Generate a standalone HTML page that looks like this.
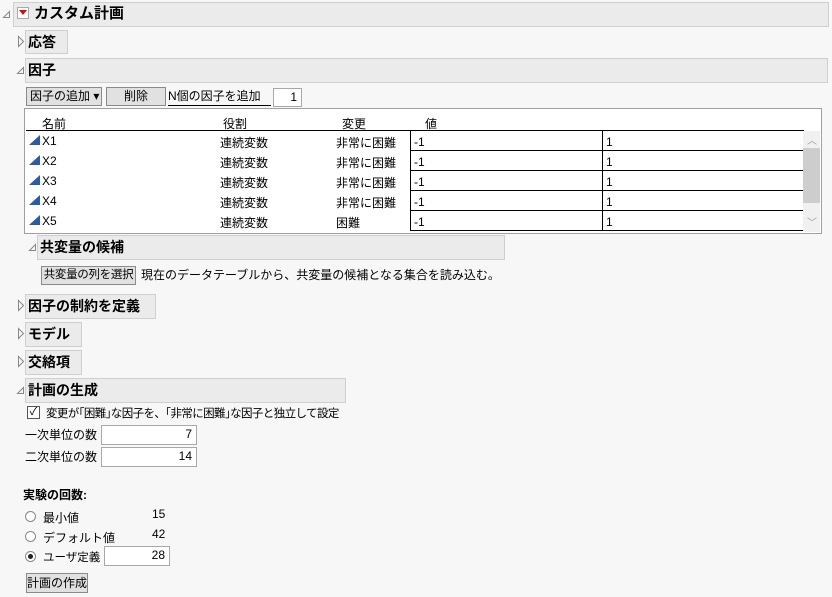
<!DOCTYPE html>
<html><head><meta charset="utf-8"><style>
body{margin:0;width:832px;height:597px;background:#f7f7f7;font-family:"Liberation Sans","Noto Sans CJK JP",sans-serif;font-size:12px;color:#000;position:relative;overflow:hidden}
.a{position:absolute;white-space:nowrap}
.hd{position:absolute;background:#ebebeb;border:1px solid #cfcfcf;box-sizing:border-box;font-weight:bold;font-size:14px;line-height:22px;padding-left:2px;white-space:nowrap}
.tri{position:absolute;width:0;height:0}
.btn{position:absolute;background:#e1e1e1;border:1px solid #8a8a8a;box-sizing:border-box;text-align:center;line-height:17px;font-size:12px;white-space:nowrap;overflow:hidden}
.inp{position:absolute;background:#fff;border:1px solid #a8a8a8;box-sizing:border-box;text-align:right;padding-right:4px;line-height:17px}
.rad{position:absolute;width:11px;height:11px;border:1px solid #888;border-radius:50%;background:#fff;box-sizing:border-box}
.row{position:absolute;left:26px;height:20px;width:777px}
.row span{position:absolute;top:4px}
.cell{position:absolute;top:0;height:21px;border:1px solid #000;box-sizing:border-box;background:#fff;padding-left:3px;line-height:22px}
.ic{position:absolute;left:3px;top:5px;width:0;height:0;border-left:11px solid transparent;border-bottom:10px solid #2c5aa8}
</style></head><body>
<svg class="a" style="left:0;top:0" width="832" height="597">
<g fill="none" stroke="#888" stroke-width="1">
<path d="M3.5 17.5 L9.5 11.5 L9.5 17.5 Z"/>
<path d="M17.5 73.5 L23.5 67.5 L23.5 73.5 Z"/>
<path d="M29.5 250.5 L35.5 244.5 L35.5 250.5 Z"/>
<path d="M17.5 393.5 L23.5 387.5 L23.5 393.5 Z"/>
<path d="M18.5 36.5 L23.5 41.5 L18.5 46.5 Z"/>
<path d="M18.5 300.5 L23.5 305.5 L18.5 310.5 Z"/>
<path d="M18.5 328.5 L23.5 333.5 L18.5 338.5 Z"/>
<path d="M18.5 356.5 L23.5 361.5 L18.5 366.5 Z"/>
</g>
</svg>
<div class="hd" style="left:13px;top:2px;width:816px;height:25px;padding-left:20px;font-size:15px">カスタム計画</div>
<div class="a" style="left:17px;top:7px;width:12px;height:12px;border:1px solid #aaa;background:#fff;box-sizing:border-box"></div>
<div class="tri" style="left:19px;top:10px;border-left:4px solid transparent;border-right:4px solid transparent;border-top:5px solid #d01010"></div>
<div class="hd" style="left:25px;top:30px;width:43px;height:24px">応答</div>
<div class="hd" style="left:25px;top:58px;width:803px;height:25px">因子</div>
<div class="btn" style="left:26px;top:87px;width:76px;height:19px;text-align:left;padding-left:3px">因子の追加 ▾</div>
<div class="btn" style="left:106px;top:87px;width:60px;height:19px">削除</div>
<div class="a" style="left:168px;top:88px;width:103px;border-bottom:1px solid #000;line-height:17px">N個の因子を追加</div>
<div class="inp" style="left:273px;top:88px;width:29px;height:19px">1</div>
<div class="a" style="left:24px;top:108px;width:798px;height:126px;border:1px solid #a0a0a0;background:#fff;box-sizing:border-box"></div>
<div class="a" style="left:42px;top:115px">名前</div>
<div class="a" style="left:223px;top:115px">役割</div>
<div class="a" style="left:342px;top:115px">変更</div>
<div class="a" style="left:425px;top:115px">値</div>
<div class="a" style="left:26px;top:130px;width:777px;height:1px;background:#000"></div>
<div class="row" style="top:130px"><div class="ic"></div><span style="left:16px">X1</span><span style="left:194px">連続変数</span><span style="left:310px">非常に困難</span><div class="cell" style="left:384px;width:193px">-1</div><div class="cell" style="left:576px;width:202px">1</div></div>
<div class="row" style="top:150px"><div class="ic"></div><span style="left:16px">X2</span><span style="left:194px">連続変数</span><span style="left:310px">非常に困難</span><div class="cell" style="left:384px;width:193px">-1</div><div class="cell" style="left:576px;width:202px">1</div></div>
<div class="row" style="top:170px"><div class="ic"></div><span style="left:16px">X3</span><span style="left:194px">連続変数</span><span style="left:310px">非常に困難</span><div class="cell" style="left:384px;width:193px">-1</div><div class="cell" style="left:576px;width:202px">1</div></div>
<div class="row" style="top:190px"><div class="ic"></div><span style="left:16px">X4</span><span style="left:194px">連続変数</span><span style="left:310px">非常に困難</span><div class="cell" style="left:384px;width:193px">-1</div><div class="cell" style="left:576px;width:202px">1</div></div>
<div class="row" style="top:210px"><div class="ic"></div><span style="left:16px">X5</span><span style="left:194px">連続変数</span><span style="left:310px">困難</span><div class="cell" style="left:384px;width:193px;height:21px">-1</div><div class="cell" style="left:576px;width:202px;height:21px">1</div></div>
<div class="a" style="left:803px;top:131px;width:17px;height:101px;background:#f0f0f0"></div>
<div class="a" style="left:803px;top:148px;width:17px;height:55px;background:#cdcdcd"></div>
<div class="a" style="left:807px;top:132px;font-size:10px;color:#999">︿</div>
<div class="a" style="left:807px;top:214px;font-size:10px;color:#999">﹀</div>
<div class="hd" style="left:37px;top:235px;width:468px;height:25px">共変量の候補</div>
<div class="btn" style="left:41px;top:266px;width:95px;height:19px;font-size:11.5px;letter-spacing:-0.3px">共変量の列を選択</div>
<div class="a" style="left:141px;top:266px">現在のデータテーブルから、共変量の候補となる集合を読み込む。</div>
<div class="hd" style="left:25px;top:294px;width:131px;height:25px">因子の制約を定義</div>
<div class="hd" style="left:25px;top:322px;width:57px;height:25px">モデル</div>
<div class="hd" style="left:25px;top:350px;width:57px;height:25px">交絡項</div>
<div class="hd" style="left:25px;top:378px;width:321px;height:25px">計画の生成</div>
<div class="a" style="left:27px;top:406px;width:13px;height:13px;border:1px solid #555;background:#fff;box-sizing:border-box;font-size:11px;line-height:11px;text-align:center">✓</div>
<div class="a" style="left:46px;top:405px;font-size:11.5px;letter-spacing:-0.6px">変更が｢困難｣な因子を、｢非常に困難｣な因子と独立して設定</div>
<div class="a" style="left:25px;top:426px">一次単位の数</div>
<div class="inp" style="left:101px;top:425px;width:96px;height:20px">7</div>
<div class="a" style="left:25px;top:448px">二次単位の数</div>
<div class="inp" style="left:101px;top:447px;width:96px;height:20px">14</div>
<div class="a" style="left:23px;top:486px;font-weight:bold">実験の回数:</div>
<div class="rad" style="left:25px;top:511px"></div>
<div class="a" style="left:43px;top:509px">最小値</div><div class="a" style="left:152px;top:507px">15</div>
<div class="rad" style="left:25px;top:531px"></div>
<div class="a" style="left:43px;top:529px">デフォルト値</div><div class="a" style="left:152px;top:527px">42</div>
<div class="rad" style="left:25px;top:551px"></div>
<div class="a" style="left:28px;top:554px;width:5px;height:5px;border-radius:50%;background:#222"></div>
<div class="a" style="left:43px;top:549px;font-size:11.5px">ユーザ定義</div>
<div class="inp" style="left:104px;top:546px;width:66px;height:20px">28</div>
<div class="btn" style="left:26px;top:573px;width:62px;height:20px;line-height:18px">計画の作成</div>
</body></html>
